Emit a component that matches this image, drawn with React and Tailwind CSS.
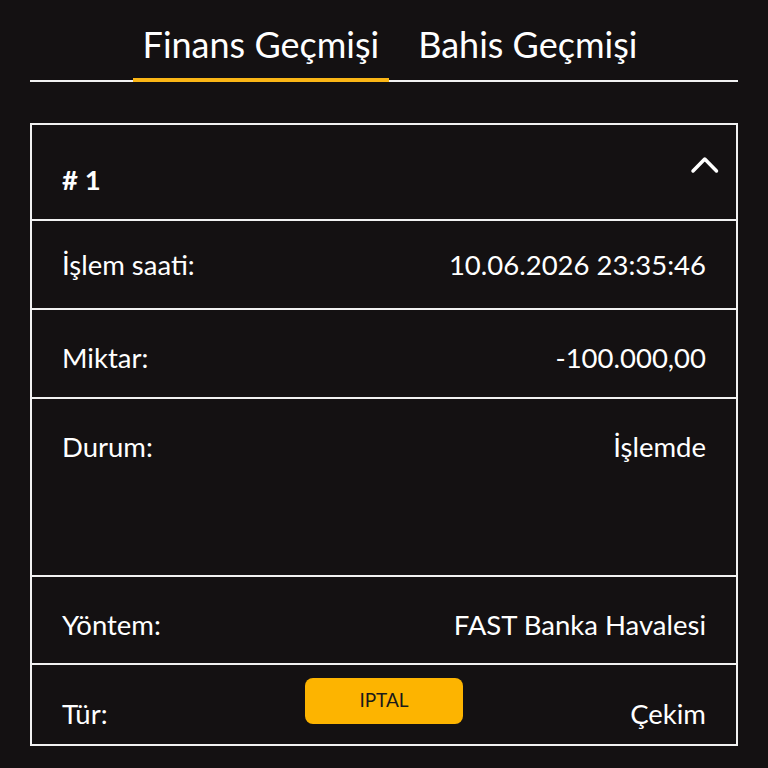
const rows = [
  { label: "İşlem saati:", value: "10.06.2026 23:35:46", h: "h-[89px]", pt: "pt-[29px]" },
  { label: "Miktar:", value: "-100.000,00", h: "h-[89px]", pt: "pt-[33px]" },
  { label: "Durum:", value: "İşlemde", h: "h-[178px]", pt: "pt-[33px]" },
  { label: "Yöntem:", value: "FAST Banka Havalesi", h: "h-[88px]", pt: "pt-[33px]" },
];

export default function App() {
  return (
    <div
      className="min-h-[768px] w-full bg-[#141112] text-white"
      style={{ fontFamily: "Lato, 'Noto Sans', sans-serif" }}
    >
      <div className="px-[30px] pt-[22px]">
        <div className="flex justify-center border-b-2 border-[#f2f2f2] pl-[12px]">
          <button className="relative px-[10px] pb-[14px] text-[36px] leading-[44px] text-white">
            Finans Geçmişi
            <span className="absolute left-0 right-0 -bottom-[2px] h-[4px] bg-[#fbb616]" />
          </button>
          <button className="ml-[19px] px-[10px] pb-[14px] text-[36px] leading-[44px] text-white">
            Bahis Geçmişi
          </button>
        </div>

        <div className="mt-[41px] border-2 border-[#f2f2f2]">
          <div className="relative h-[94px] px-[30px]">
            <div className="pt-[40px] text-[27.5px] font-bold leading-[30px]">
              # 1
            </div>
            <svg
              className="absolute right-[16px] top-[31px]"
              width="30"
              height="18"
              viewBox="0 0 30 18"
              fill="none"
              stroke="white"
              strokeWidth="3.5"
              strokeLinecap="round"
              strokeLinejoin="round"
            >
              <polyline points="3,15 14.75,3 26.5,15" />
            </svg>
          </div>

          {rows.map((r) => (
            <div
              key={r.label}
              className={`${r.h} ${r.pt} flex items-start justify-between border-t-2 border-[#f2f2f2] px-[30px] text-[27.5px] leading-[30px]`}
            >
              <span>{r.label}</span>
              <span>{r.value}</span>
            </div>
          ))}

          <div className="relative flex h-[81px] items-start justify-between border-t-2 border-[#f2f2f2] px-[30px] pt-[34px] text-[27.5px] leading-[30px]">
            <span>Tür:</span>
            <div className="absolute left-[273px] top-[13px] flex h-[46px] w-[158px] items-center justify-center rounded-[8px] bg-[#fdb400] pb-[3px] text-[19px] text-[#1a1a1a]">
              IPTAL
            </div>
            <span>Çekim</span>
          </div>
        </div>
      </div>
    </div>
  );
}
